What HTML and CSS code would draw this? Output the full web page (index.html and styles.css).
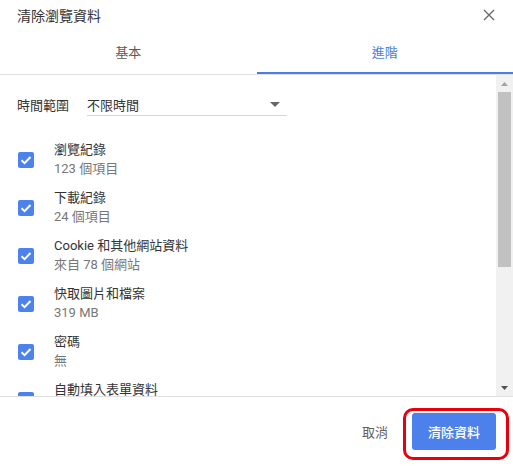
FILE: index.html
```html
<!DOCTYPE html>
<html lang="zh-Hant">
<head>
    <meta charset="UTF-8">
    <meta name="viewport" content="width=device-width, initial-scale=1.0">
    <title>清除瀏覽資料</title>
    <link rel="stylesheet" href="styles.css">
</head>
<body>
    <div class="dialog">
        <div class="dialog-head">
            <h1 class="dialog-title">清除瀏覽資料</h1>
            <button class="close-btn" aria-label="關閉">
                <svg width="12" height="12" viewBox="0 0 12 12">
                    <path d="M1 1L11 11M11 1L1 11" stroke="#6b6b6b" stroke-width="1.4" fill="none"/>
                </svg>
            </button>
        </div>

        <div class="tabs">
            <div class="tab">基本</div>
            <div class="tab active">進階</div>
        </div>

        <div class="dialog-body">
            <div class="body-content">
                <div class="range-row">
                    <span class="range-label">時間範圍</span>
                    <div class="select">
                        <span>不限時間</span>
                        <svg width="10" height="5" viewBox="0 0 10 5"><path d="M0 0H10L5 5Z" fill="#666"/></svg>
                    </div>
                </div>

                <ul class="options">
                    <li class="option">
                        <span class="checkbox"><svg width="16" height="16" viewBox="0 0 16 16"><path d="M3.5 8.2L6.6 11.2L12.5 5" stroke="#fff" stroke-width="2" fill="none"/></svg></span>
                        <div class="option-text"><div class="option-title">瀏覽紀錄</div><div class="option-sub">123 個項目</div></div>
                    </li>
                    <li class="option">
                        <span class="checkbox"><svg width="16" height="16" viewBox="0 0 16 16"><path d="M3.5 8.2L6.6 11.2L12.5 5" stroke="#fff" stroke-width="2" fill="none"/></svg></span>
                        <div class="option-text"><div class="option-title">下載紀錄</div><div class="option-sub">24 個項目</div></div>
                    </li>
                    <li class="option">
                        <span class="checkbox"><svg width="16" height="16" viewBox="0 0 16 16"><path d="M3.5 8.2L6.6 11.2L12.5 5" stroke="#fff" stroke-width="2" fill="none"/></svg></span>
                        <div class="option-text"><div class="option-title">Cookie 和其他網站資料</div><div class="option-sub">來自 78 個網站</div></div>
                    </li>
                    <li class="option">
                        <span class="checkbox"><svg width="16" height="16" viewBox="0 0 16 16"><path d="M3.5 8.2L6.6 11.2L12.5 5" stroke="#fff" stroke-width="2" fill="none"/></svg></span>
                        <div class="option-text"><div class="option-title">快取圖片和檔案</div><div class="option-sub">319 MB</div></div>
                    </li>
                    <li class="option">
                        <span class="checkbox"><svg width="16" height="16" viewBox="0 0 16 16"><path d="M3.5 8.2L6.6 11.2L12.5 5" stroke="#fff" stroke-width="2" fill="none"/></svg></span>
                        <div class="option-text"><div class="option-title">密碼</div><div class="option-sub">無</div></div>
                    </li>
                    <li class="option">
                        <span class="checkbox"><svg width="16" height="16" viewBox="0 0 16 16"><path d="M3.5 8.2L6.6 11.2L12.5 5" stroke="#fff" stroke-width="2" fill="none"/></svg></span>
                        <div class="option-text"><div class="option-title">自動填入表單資料</div><div class="option-sub">&nbsp;</div></div>
                    </li>
                </ul>
            </div>

            <div class="scrollbar">
                <div class="sb-btn"><svg width="7" height="4" viewBox="0 0 7 4"><path d="M0 4H7L3.5 0Z" fill="#a3a3a3"/></svg></div>
                <div class="sb-thumb"></div>
                <div class="sb-track"></div>
                <div class="sb-btn"><svg width="7" height="4" viewBox="0 0 7 4"><path d="M0 0H7L3.5 4Z" fill="#505050"/></svg></div>
            </div>
        </div>

        <div class="dialog-foot">
            <button class="btn-cancel">取消</button>
            <span class="btn-wrap">
                <button class="btn-primary">清除資料</button>
                <span class="highlight"></span>
            </span>
        </div>
    </div>
</body>
</html>
```

FILE: styles.css
```css
body {
    margin: 0;
    background: #fff;
    font-family: Roboto, "Noto Sans CJK TC", sans-serif;
    color: #333;
}
.dialog {
    width: 513px;
    height: 466px;
    display: flex;
    flex-direction: column;
}
.dialog-head {
    height: 30px;
    display: flex;
    align-items: center;
    justify-content: space-between;
    padding: 0 18px 0 17px;
}
.dialog-title {
    margin: 0;
    font-size: 14px;
    font-weight: normal;
    line-height: 20px;
    padding-top: 2px;
    color: #333;
}
.close-btn {
    border: none;
    background: none;
    padding: 0;
    width: 12px;
    height: 12px;
    display: flex;
}
.tabs {
    display: flex;
    border-bottom: 1px solid #e0e0e0;
}
.tab {
    flex: 1;
    text-align: center;
    font-size: 13px;
    line-height: 20px;
    padding: 13px 0 9px;
    border-bottom: 2px solid transparent;
    color: #5a5a5a;
}
.tab.active {
    color: #4a7fde;
    border-bottom-color: #4a7fde;
}
.dialog-body {
    height: 321px;
    display: flex;
}
.body-content {
    flex: 1;
    overflow: hidden;
    padding-left: 17px;
}
.range-row {
    display: flex;
    align-items: baseline;
    padding-top: 14px;
    font-size: 13px;
}
.range-label {
    width: 70px;
}
.select {
    width: 193px;
    height: 22px;
    padding: 4px 7px 0 0;
    display: flex;
    align-items: center;
    justify-content: space-between;
    border-bottom: 1px solid #d6d6d6;
}
.options {
    list-style: none;
    margin: 20px 0 0;
    padding: 0;
}
.option {
    height: 48px;
    display: flex;
    align-items: center;
}
.checkbox {
    width: 16px;
    height: 16px;
    margin-left: 1px;
    border-radius: 2px;
    background: #4c82ea;
    display: flex;
}
.option-text {
    margin-left: 20px;
    font-size: 13px;
    margin-top: -3px;
}
.option-title {
    line-height: 19px;
    color: #333;
}
.option-sub {
    line-height: 19px;
    color: #777;
}
.scrollbar {
    width: 17px;
    background: #f1f1f1;
    display: flex;
    flex-direction: column;
}
.sb-btn {
    height: 17px;
    display: flex;
    align-items: center;
    justify-content: center;
}
.sb-thumb {
    height: 175px;
    margin: 0 2px;
    background: #c1c1c1;
}
.sb-track {
    flex: 1;
}
.dialog-foot {
    flex: 1;
    border-top: 1px solid #e0e0e0;
    display: flex;
    align-items: center;
    justify-content: flex-end;
    padding: 0 17px 0 0;
}
.btn-cancel {
    border: none;
    background: none;
    font: inherit;
    font-size: 13px;
    color: #5f5f5f;
    padding: 8px 12px;
    margin-right: 12px;
}
.btn-wrap {
    position: relative;
    display: flex;
}
.btn-primary {
    width: 84px;
    height: 37px;
    border: none;
    border-radius: 3px;
    background: #4c80ea;
    color: #fff;
    font: inherit;
    font-size: 13px;
    font-weight: 500;
    padding: 0;
}
.highlight {
    position: absolute;
    left: -9px;
    top: -5px;
    right: -13px;
    bottom: -10px;
    border: 3px solid #e8000d;
    border-radius: 10px;
}
```
